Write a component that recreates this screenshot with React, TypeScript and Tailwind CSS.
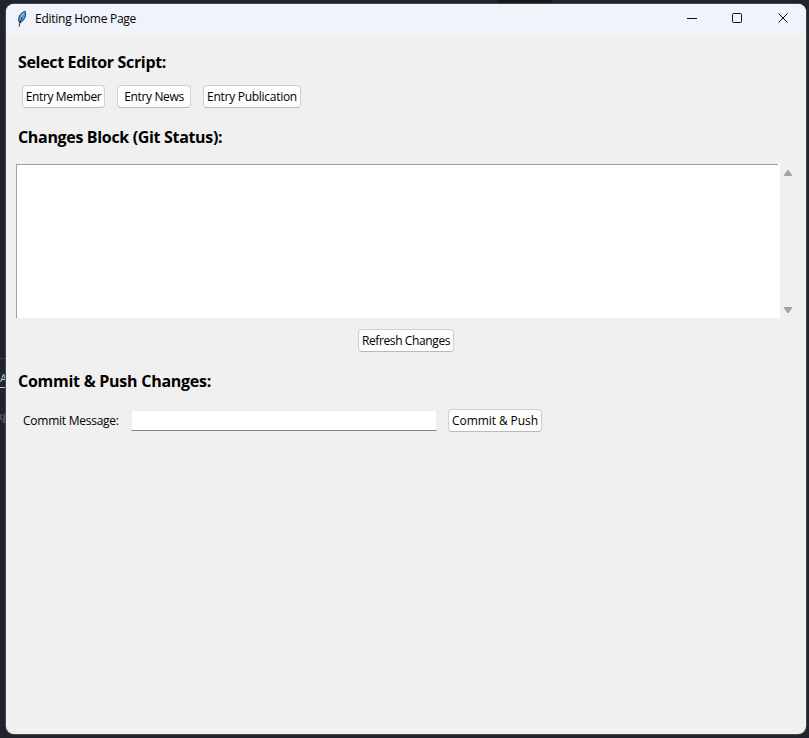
import type { ReactNode } from "react";

function Heading({ children, className }: { children: ReactNode; className: string }) {
  return <h2 className={`whitespace-nowrap text-[16px] font-bold leading-5 ${className}`}>{children}</h2>;
}

function Button({ children, className }: { children: ReactNode; className: string }) {
  return (
    <button
      className={`flex h-[23px] shrink-0 items-center justify-center whitespace-nowrap rounded-[4px] border border-[#d0d0d0] border-b-[#bababa] bg-[#fdfdfd] text-[12px] leading-4 ${className}`}
    >
      {children}
    </button>
  );
}

function Feather() {
  return (
    <svg width="12" height="18" viewBox="0 0 12 18" className="shrink-0">
      <path d="M3.2 12.2C1.2 8.5 4.2 2.7 9 1.2c1.5 3.6.2 8.5-4.3 11.2z" fill="#4c98ea" stroke="#1b2533" strokeWidth="0.9" />
      <path d="M8 2.8C6 5.5 4.6 8 4 11" fill="none" stroke="#a5d3ff" strokeWidth="1" />
      <path d="M6.2 7C4.6 10 3.7 13 3.2 16.5" fill="none" stroke="#101722" strokeWidth="0.9" />
    </svg>
  );
}

function TitleBar() {
  return (
    <header className="flex h-[30px] shrink-0 items-center bg-[#f0f3fa] pl-[10px]">
      <Feather />
      <span className="ml-[7px] whitespace-nowrap text-[12px] leading-4 tracking-[-0.26px]">Editing Home Page</span>
      <svg width="104" height="12" viewBox="0 0 104 12" className="relative -top-px ml-auto mr-[16px] shrink-0" fill="none" stroke="#111">
        <path d="M1 6.5h10" />
        <rect x="46.5" y="1.5" width="9" height="9" rx="1" />
        <path d="M92.5 1.5l9 9m0-9l-9 9" />
      </svg>
    </header>
  );
}

export default function App() {
  return (
    <div className="relative h-[738px] w-[809px] overflow-hidden bg-[#20232b] pl-[6px] pt-[4px] font-['Open_Sans','Noto_Sans',sans-serif] text-black">
      <div className="absolute left-[498px] top-0 h-[3px] w-[54px] bg-[#17191d]" />
      <div className="absolute left-0 top-[358px] h-px w-[6px] bg-[#3d4047]" />
      <div className="absolute left-0 top-[370px] text-[11px] leading-4 text-[#b9c7d5]">A</div>
      <div className="absolute left-0 top-[387px] h-px w-[6px] bg-[#c8c9cc]" />
      <div className="absolute -left-[3px] top-[408px] text-[11px] leading-4 text-[#777f8a]">kg</div>

      <main className="relative flex h-[730px] w-[800px] flex-col overflow-hidden rounded-[8px] bg-[#f0f0f0] shadow-[0_0_0_1px_#44474b]">
        <TitleBar />
        <Heading className="ml-[12px] mt-[18px] tracking-[-0.33px]">Select Editor Script:</Heading>
        <div className="ml-[16px] mt-[13px] flex gap-[12px]">
          <Button className="w-[83px] tracking-[-0.36px]">Entry Member</Button>
          <Button className="w-[74px] tracking-[-0.36px]">Entry News</Button>
          <Button className="w-[98px] tracking-[-0.28px]">Entry Publication</Button>
        </div>
        <Heading className="ml-[12px] mt-[19px] tracking-[-0.33px]">Changes Block (Git Status):</Heading>
        <div className="ml-[10px] mt-[17px] flex h-[154px] shrink-0">
          <div className="flex w-[764px] bg-white">
            <div className="w-[762px] border-l border-t border-[#a0a0a0]" />
          </div>
          <div className="flex flex-col items-center justify-between pb-[5px] pl-[4px] pt-[6px]">
            <svg width="8" height="6" viewBox="0 0 8 6">
              <path d="M0 6V5L3 .5Q4-.5 5 .5L8 5v1z" fill="#a3a3a3" />
            </svg>
            <svg width="8" height="6" viewBox="0 0 8 6">
              <path d="M0 0v1l3 4.5q1 1 2 0L8 1V0z" fill="#a3a3a3" />
            </svg>
          </div>
        </div>
        <Button className="ml-[352px] mt-[11px] w-[96px] tracking-[-0.38px]">Refresh Changes</Button>
        <Heading className="ml-[12px] mt-[19px] tracking-[-0.26px]">Commit &amp; Push Changes:</Heading>
        <div className="ml-[17px] mt-[18px] flex h-[23px] shrink-0 items-center">
          <label htmlFor="message" className="w-[108px] whitespace-nowrap text-[12px] leading-4 tracking-[-0.25px]">Commit Message:</label>
          <input id="message" className="h-[21px] w-[306px] border border-[#ececec] border-b-[#868686] bg-white outline-none" />
          <Button className="ml-[11px] w-[94px] tracking-[-0.08px]">Commit &amp; Push</Button>
        </div>
      </main>
    </div>
  );
}
